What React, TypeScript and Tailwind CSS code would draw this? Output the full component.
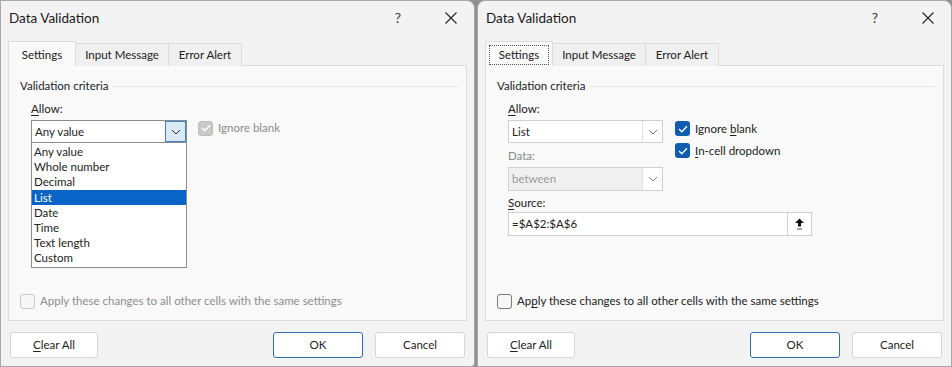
import React from "react";

const Chevron = ({ color = "#606060" }: { color?: string }) => (
  <svg width="10" height="6" viewBox="0 0 10 6" fill="none">
    <path d="M1 1 L5 5 L9 1" stroke={color} strokeWidth="1" />
  </svg>
);

const Check = ({ color = "white" }: { color?: string }) => (
  <svg width="10" height="8" viewBox="0 0 10 8" fill="none">
    <path d="M1 4 L3.8 6.8 L9 1.2" stroke={color} strokeWidth="1.3" />
  </svg>
);

const TitleBar = () => (
  <div className="h-[34px] flex items-center pl-[8px] pr-[17px] shrink-0">
    <span className="text-[13.5px] text-[#1a1a1a]">Data Validation</span>
    <span className="ml-auto text-[14px] text-[#333] mr-[44px]">?</span>
    <svg width="12" height="12" viewBox="0 0 12 12" fill="none">
      <path d="M0.5 0.5 L11.5 11.5 M11.5 0.5 L0.5 11.5" stroke="#222" strokeWidth="1.1" />
    </svg>
  </div>
);

const Tabs = ({ focus }: { focus: boolean }) => (
  <div className="flex items-end h-[25px] ml-[7px] shrink-0 relative z-10">
    <div className="h-[25px] w-[68px] px-[3px] pt-[3px] bg-[#f9f9f9] border border-[#dcdcdc] border-b-0 flex">
      <div
        className={
          "h-[20px] flex-1 flex items-center justify-center " +
          (focus ? "border border-dotted border-[#555]" : "border border-transparent")
        }
      >
        Settings
      </div>
    </div>
    <div className="h-[23px] w-[93px] flex items-center justify-center bg-[#f0f0f0] border border-[#dcdcdc] border-l-0 border-b-0">
      Input Message
    </div>
    <div className="h-[23px] w-[73px] flex items-center justify-center bg-[#f0f0f0] border border-[#dcdcdc] border-l-0 border-b-0">
      Error Alert
    </div>
  </div>
);

const Legend = () => (
  <div className="flex items-center h-[16px] mt-[12px]">
    <span className="text-[#222]">Validation criteria</span>
    <div className="flex-1 border-t border-[#e3e3e3] ml-[4px] mr-[8px]" />
  </div>
);

const Buttons = () => (
  <div className="flex mt-[11px] px-[9px] h-[26px] shrink-0">
    <div className="w-[88px] h-[26px] bg-white border border-[#d6d6d6] rounded-[3px] flex items-center justify-center">
      <span>
        <span className="underline underline-offset-2">C</span>lear All
      </span>
    </div>
    <div className="ml-auto w-[90px] h-[26px] bg-white border border-[#2a6fb5] rounded-[3px] flex items-center justify-center">
      OK
    </div>
    <div className="ml-[12px] w-[90px] h-[26px] bg-white border border-[#d6d6d6] rounded-[3px] flex items-center justify-center">
      Cancel
    </div>
  </div>
);

const LeftDialog = () => {
  const items = ["Any value", "Whole number", "Decimal", "List", "Date", "Time", "Text length", "Custom"];
  return (
    <div className="w-[475px] h-[367px] bg-[#f3f3f3] border border-[#a8a8a8] rounded-tr-[8px] rounded-br-[4px] flex flex-col shrink-0">
      <TitleBar />
      <div className="h-[6px] shrink-0" />
      <Tabs focus={false} />
      <div className="mx-[7px] h-[256px] -mt-px bg-[#f9f9f9] border border-[#dcdcdc] flex flex-col pl-[11px] relative">
        <Legend />
        <div className="mt-[7px] ml-[11px] h-[16px] flex items-center">
          <span>
            <span className="underline underline-offset-2">A</span>llow:
          </span>
        </div>
        <div className="mt-[3px] ml-[11px] flex items-start">
          <div className="w-[156px] h-[23px] bg-white border border-[#8c8c8c] flex items-center pl-[3px] relative">
            <span>Any value</span>
            <div className="absolute right-0 top-0 w-[21px] h-[21px] bg-[#dbe9f7] border border-[#3c83c8] flex items-center justify-center">
              <Chevron color="#333" />
            </div>
          </div>
          <div className="ml-[11px] flex items-center h-[16px] mt-[0px]">
            <div className="w-[15px] h-[15px] rounded-[3px] bg-[#c9c9c9] border border-[#bcbcbc] flex items-center justify-center">
              <Check />
            </div>
            <span className="ml-[5px] text-[#8c8c8c]">Ignore blank</span>
          </div>
        </div>
        <div className="absolute left-[22px] top-[77px] w-[156px] bg-white border border-[#8c8c8c] border-t-0 py-[1px]">
          {items.map((it) => (
            <div
              key={it}
              className={
                "h-[15.2px] leading-[15px] pl-[2px] " + (it === "List" ? "bg-[#0a64c8] text-white" : "text-[#222]")
              }
            >
              {it}
            </div>
          ))}
        </div>
        <div className="mt-auto mb-[11px] flex items-center h-[16px]">
          <div className="w-[15px] h-[15px] rounded-[3px] border border-[#c8c8c8] bg-[#f6f6f6]" />
          <span className="ml-[5px] text-[#8e8e8e]">Apply these changes to all other cells with the same settings</span>
        </div>
      </div>
      <Buttons />
    </div>
  );
};

const RightDialog = () => (
  <div className="w-[475px] h-[367px] bg-[#f3f3f3] border border-[#a8a8a8] rounded-tl-[8px] rounded-tr-[8px] flex flex-col shrink-0">
    <TitleBar />
    <div className="h-[6px] shrink-0" />
    <Tabs focus={true} />
    <div className="mx-[7px] h-[256px] -mt-px bg-[#f9f9f9] border border-[#dcdcdc] flex flex-col pl-[11px]">
      <Legend />
      <div className="flex ml-[11px]">
        <div className="flex flex-col w-[155px]">
          <div className="mt-[7px] h-[16px] flex items-center">
            <span>
              <span className="underline underline-offset-2">A</span>llow:
            </span>
          </div>
          <div className="mt-[3px] w-[155px] h-[23px] bg-white border border-[#cfcfcf] flex items-center pl-[3px] relative">
            <span>List</span>
            <div className="absolute right-0 top-0 w-[20px] h-[21px] border-l border-[#e0e0e0] flex items-center justify-center">
              <Chevron color="#777" />
            </div>
          </div>
          <div className="mt-[5px] h-[16px] flex items-center text-[#8a8a8a]">Data:</div>
          <div className="mt-[3px] w-[155px] h-[24px] bg-[#f0f0f0] border border-[#d0d0d0] flex items-center pl-[3px] relative text-[#9a9a9a]">
            <span>between</span>
            <div className="absolute right-0 top-0 w-[20px] h-[22px] bg-white border-l border-[#e0e0e0] flex items-center justify-center">
              <Chevron color="#888" />
            </div>
          </div>
          <div className="mt-[4px] h-[16px] flex items-center">
            <span>
              <span className="underline underline-offset-2">S</span>ource:
            </span>
          </div>
        </div>
        <div className="ml-[12px] mt-[27px] flex flex-col gap-[7px]">
          <div className="flex items-center h-[15px]">
            <div className="w-[15px] h-[15px] rounded-[3px] bg-[#0f5cb0] flex items-center justify-center">
              <Check />
            </div>
            <span className="ml-[5px]">
              Ignore <span className="underline underline-offset-2">b</span>lank
            </span>
          </div>
          <div className="flex items-center h-[15px]">
            <div className="w-[15px] h-[15px] rounded-[3px] bg-[#0f5cb0] flex items-center justify-center">
              <Check />
            </div>
            <span className="ml-[5px]">
              <span className="underline underline-offset-2">I</span>n-cell dropdown
            </span>
          </div>
        </div>
      </div>
      <div className="ml-[11px] mt-[1px] flex h-[24px]">
        <div className="w-[280px] h-[24px] bg-white border border-[#cfcfcf] flex items-center pl-[3px]">=$A$2:$A$6</div>
        <div className="w-[24px] h-[24px] bg-white border border-[#cfcfcf] border-l-0 flex items-center justify-center">
          <svg width="11" height="12" viewBox="0 0 11 12">
            <path d="M5.5 0.5 L10 5 L7 5 L7 8.5 L4 8.5 L4 5 L1 5 Z" fill="#111" />
            <rect x="3" y="10.5" width="5" height="1" fill="#444" />
          </svg>
        </div>
      </div>
      <div className="mt-auto mb-[11px] flex items-center h-[16px]">
        <div className="w-[15px] h-[15px] rounded-[3px] border border-[#7a7a7a] bg-[#f6f6f6]" />
        <span className="ml-[5px] text-[#222]">
          Ap<span className="underline underline-offset-2">p</span>ly these changes to all other cells with the same settings
        </span>
      </div>
    </div>
    <Buttons />
  </div>
);

export default function App() {
  return (
    <div className="w-[952px] h-[367px] bg-[#8f8f8f] flex gap-[2px] overflow-hidden font-['Lato',sans-serif] text-[11.5px] text-[#222] leading-[16px]">
      <LeftDialog />
      <RightDialog />
    </div>
  );
}
